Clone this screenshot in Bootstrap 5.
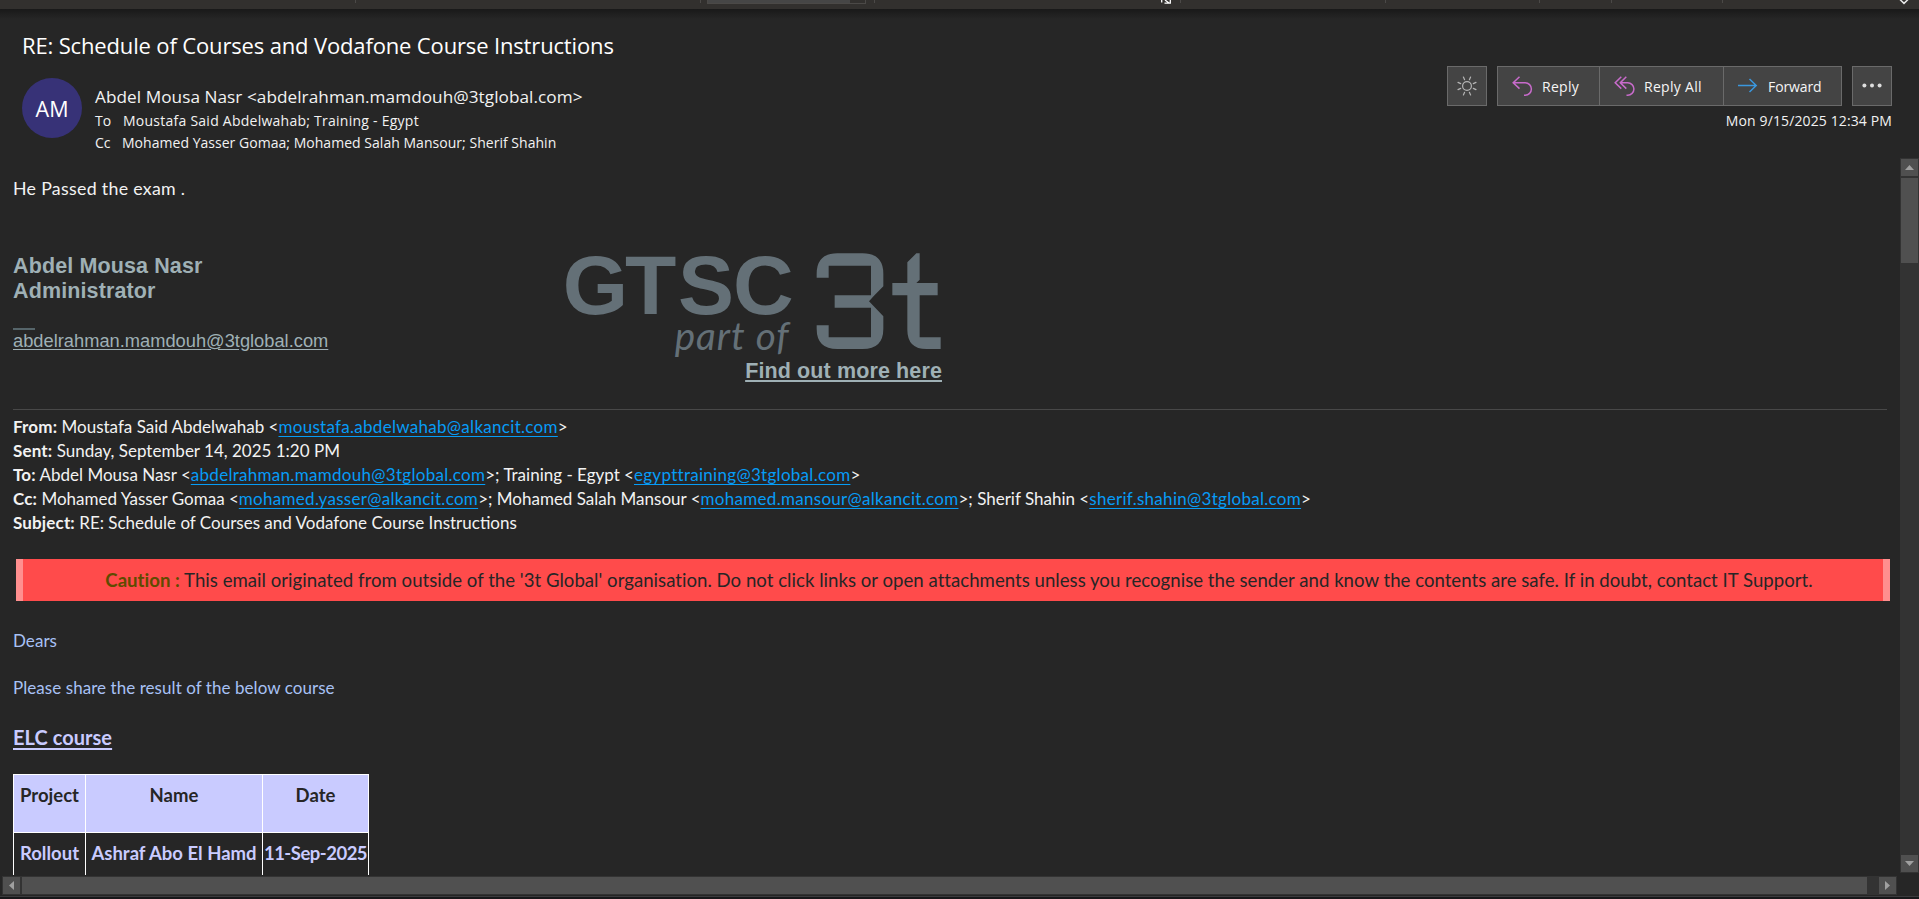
<!DOCTYPE html>
<html lang="en" data-bs-theme="dark">
<head>
<meta charset="utf-8">
<meta name="viewport" content="width=device-width, initial-scale=1">
<title>RE: Schedule of Courses and Vodafone Course Instructions</title>
<link href="https://cdn.jsdelivr.net/npm/bootstrap@5.3.0/dist/css/bootstrap.min.css" rel="stylesheet">
<style>
  body { background: #262626; color: #f2f2f2; font-family: "Open Sans", sans-serif; height: 100vh; }
  .ribbon { height: 9px; background: #32302e; flex: none; }
  .ribbon i { width: 1px; height: 3px; background: #4b4947; }
  .ribbon .field { width: 159px; height: 4px; border: 1px solid #4b4947; border-top: 0; background: linear-gradient(90deg, #464646 142px, #32302e 142px); }
  .ribbon svg { display: block; }

  .msg-head { height: 149px; background: linear-gradient(#191919, #262626 10px); flex: none; padding: 21px 27px 0 22px; }
  .subject { font-size: 22px; line-height: 30px; letter-spacing: -.15px; color: #fff; margin: 0 0 18px; font-weight: 400; }
  .avatar { width: 60px; height: 60px; background: #373277; font-size: 21.5px; line-height: 62px; color: #fff; }
  .people { margin-left: 13px; padding-top: 6px; }
  .from-line { font-size: 17.2px; line-height: 25px; letter-spacing: .05px; margin-bottom: 1px; }
  .rcpt { font-size: 14px; line-height: 22px; }
  .rcpt > span:first-child { width: 27px; }
  .actions { padding-top: 36px; font-size: 14px; gap: 10px; }
  .btn-mail { --bs-btn-bg: #444; --bs-btn-color: #f5f5f5; --bs-btn-border-color: #6a6a6a; --bs-btn-border-radius: 0; --bs-btn-font-size: 14px; --bs-btn-padding-y: 0; height: 40px; display: flex; align-items: center; }
  .btn-sq { width: 40px; padding: 0; justify-content: center; }
  .stamp { font-size: 14px; line-height: 22px; letter-spacing: .12px; padding-top: 4px; }

  .mail { font-family: Lato, sans-serif; font-size: 17px; line-height: 24px; height: 717px; padding: 18px 0 0 13px; white-space: nowrap; }
  .mail p { margin: 0; }
  .sig { width: 929px; margin-top: 53px; height: 155px; font-family: "Liberation Sans", sans-serif; color: #9fb0b5; }
  .sig-name { font-size: 21.5px; line-height: 25px; font-weight: 700; letter-spacing: .12px; padding-top: 1px; }
  .sig-dash { width: 22px; height: 2px; background: #56656a; margin-top: 24px; }
  .sig a, .sig-find { color: inherit; text-decoration: underline; }
  .sig-mail { font-size: 18.3px; line-height: 21px; text-underline-offset: 2px; text-decoration-thickness: 1px; }
  .sig-find { font-size: 21.5px; line-height: 25px; font-weight: 700; letter-spacing: .12px; text-underline-offset: 2px; text-decoration-thickness: 2px; }
  .rule { width: 1874px; height: 1px; background: #484848; margin: 1px 0 5px; }
  .quoted { line-height: 23.9px; height: 120px; }
  .quoted b { letter-spacing: .15px; }
  .quoted a { color: #069cf6; letter-spacing: .29px; text-decoration: underline; text-underline-offset: 3px; text-decoration-thickness: 1px; text-decoration-skip-ink: none; }
  .caution { margin: 24px 0 0 3px; width: 1874px; height: 42px; line-height: 43px; font-size: 18.6px; letter-spacing: .02px; background: #ff4b4b; color: #262626; border: solid #ff8f8f; border-width: 0 7px; padding-left: 12px; }
  .caution b { color: #5f4b00; }
  .blue { color: #a8c1f5; letter-spacing: .06px; }
  .lav { color: #c9cbff; }
  .elc { font-size: 20px; letter-spacing: .05px; text-underline-offset: 3px; text-decoration: underline 2px; text-decoration-skip-ink: none; }
  .course-tbl { width: 355px; table-layout: fixed; border-collapse: collapse; font-size: 18.5px; font-weight: 700; text-align: center; }
  .course-tbl th, .course-tbl td { border: 1px solid #fff; padding: 8px 0 0; vertical-align: top; line-height: 24px; }
  .course-tbl th { background: #c9cbff; color: #262626; height: 58px; text-align: center; }
  .course-tbl td { height: 59px; }

  .vbar { width: 19px; background: #333; height: 715px; padding: 1px; }
  .hbar { height: 19px; width: 1895px; margin: 1px 0 0 2px; background: #333; padding: 1px; }
  .sb { background: #505050; }
  .sb-end { width: 17px; height: 17px; display: flex; align-items: center; justify-content: center; flex: none; }
  .foot { margin-top: 1px; height: 3px; background: #18181a; border-top: 1px solid #3c3c3e; }
</style>
</head>
<body class="d-flex flex-column overflow-hidden">

<div class="ribbon d-flex">
  <i style="margin-left:355px"></i>
  <i style="margin-left:344px"></i>
  <span class="field" style="margin-left:6px"></span>
  <i style="margin-left:8px"></i>
  <svg style="margin-left:286px" width="10" height="4" fill="none" stroke="#fff" stroke-width="1.3"><path d="M.7 0v2.5M4 0l4 3M3.5 3.2h5.8V0"/></svg>
  <i style="margin-left:9px"></i>
  <i style="margin-left:204px"></i>
  <i style="margin-left:153px"></i>
  <i style="margin-left:71px"></i>
  <i style="margin-left:110px"></i>
  <svg style="margin-left:176px" width="10" height="5" fill="none" stroke="#e8e8e8" stroke-width="1.5"><path d="M1 -.5 5 3.4 9 -.5"/></svg>
</div>

<header class="msg-head d-flex justify-content-between">
  <div>
    <h1 class="subject">RE: Schedule of Courses and Vodafone Course Instructions</h1>
    <div class="d-flex">
      <div class="avatar rounded-circle text-center">AM</div>
      <div class="people">
        <div class="from-line">Abdel Mousa Nasr &lt;abdelrahman.mamdouh@3tglobal.com&gt;</div>
        <div class="rcpt d-flex"><span style="width:28px">To</span><span style="letter-spacing:.25px">Moustafa Said Abdelwahab; Training - Egypt</span></div>
        <div class="rcpt d-flex"><span>Cc</span><span style="letter-spacing:.03px">Mohamed Yasser Gomaa; Mohamed Salah Mansour; Sherif Shahin</span></div>
      </div>
    </div>
  </div>
  <div>
    <div class="actions d-flex">
      <button class="btn btn-mail btn-sq" aria-label="Switch background">
        <svg width="20" height="20" fill="none" stroke="#b5b5b5" stroke-width="1.2" stroke-linecap="round"><circle cx="10" cy="10" r="4.4"/><path d="M7.6 3.7 6.4 1M12.4 3.7 13.6 1M7.6 16.3 6.4 19M12.4 16.3l1.2 2.7M3.7 7.6 1 6.4M3.7 12.4 1 13.6M16.3 7.6 19 6.4M16.3 12.4l2.7 1.2"/></svg>
      </button>
      <div class="btn-group">
        <button class="btn btn-mail ps-0" style="width:103px"><svg style="margin:0 9px 0 14px" width="21" height="20" fill="none" stroke="#c86bcb" stroke-width="1.5"><path d="M7.5.8 1.2 6.8l6.3 5.8M1.4 6.8h11.8a6.2 6.2 0 0 1 0 12.4H12"/></svg><span style="letter-spacing:.27px">Reply</span></button>
        <button class="btn btn-mail ps-0" style="width:125px"><svg style="margin:0 9px 0 14px" width="21" height="20" fill="none" stroke="#c86bcb" stroke-width="1.5"><path d="M7.3.8 1.2 6.8l6.1 5.8M12.3.8l-6 6 6 5.8M6.5 6.8h7.2a6.2 6.2 0 0 1 0 12.4h-1.2"/></svg><span style="letter-spacing:.3px">Reply All</span></button>
        <button class="btn btn-mail ps-0" style="width:119px"><svg style="margin:0 10px 0 14px" width="20" height="20" fill="none" stroke="#3b97dd" stroke-width="1.5"><path d="M0 9.5h18.5M11.5 3l6.7 6.5-6.7 6.5"/></svg><span style="letter-spacing:-.1px">Forward</span></button>
      </div>
      <button class="btn btn-mail btn-sq" aria-label="More actions">
        <svg width="20" height="6" fill="#dedede"><circle cx="2.4" cy="2.6" r="2"/><circle cx="10" cy="2.6" r="2"/><circle cx="17.6" cy="2.6" r="2"/></svg>
      </button>
    </div>
    <div class="stamp text-end">Mon 9/15/2025 12:34 PM</div>
  </div>
</header>

<div class="d-flex justify-content-between">
  <main class="mail overflow-hidden flex-grow-1">
    <p style="font-size:17.8px;letter-spacing:.3px">He Passed the exam .</p>
    <div class="sig d-flex justify-content-between">
      <div>
        <div class="sig-name">Abdel Mousa Nasr<br>Administrator</div>
        <div class="sig-dash"></div>
        <a href="#" class="sig-mail">abdelrahman.mamdouh@3tglobal.com</a>
      </div>
      <div class="d-flex flex-column align-items-end">
        <svg class="overflow-visible" width="376" height="106" viewBox="78 66 1128 318" fill="#647077">
          <text x="68 255 414 579" y="249" font-family="Liberation Sans, sans-serif" font-weight="700" font-size="252">GTSC</text>
          <text x="404" y="356" font-family="Lato, sans-serif" font-style="italic" font-size="116" textLength="342">part of</text>
          <path d="M830 140V128Q830 67 892 67H968Q1030 67 1030 128V166L1002 194 987 211 1030 256V293Q1030 354 968 354H892Q830 354 830 293V283H866V319H993V230H884V193H993V104H866V140Z"/>
          <path d="M1102 94 1129 67H1139V146L1129 156H1193V193H1139V319H1202V354H1160Q1102 354 1102 296V193H1057V156H1102Z"/>
        </svg>
        <a href="#" class="sig-find">Find out more here</a>
      </div>
    </div>
    <div class="rule"></div>
    <div class="quoted">
      <p><b>From:</b> Moustafa Said Abdelwahab &lt;<a href="#">moustafa.abdelwahab@alkancit.com</a>&gt;</p>
      <p><b>Sent:</b> Sunday, September 14, 2025 1:20 PM</p>
      <p><b>To:</b> Abdel Mousa Nasr &lt;<a href="#">abdelrahman.mamdouh@3tglobal.com</a>&gt;; Training - Egypt &lt;<a href="#">egypttraining@3tglobal.com</a>&gt;</p>
      <p><b>Cc:</b> Mohamed Yasser Gomaa &lt;<a href="#">mohamed.yasser@alkancit.com</a>&gt;; Mohamed Salah Mansour &lt;<a href="#">mohamed.mansour@alkancit.com</a>&gt;; Sherif Shahin &lt;<a href="#">sherif.shahin@3tglobal.com</a>&gt;</p>
      <p><b>Subject:</b> RE: Schedule of Courses and Vodafone Course Instructions</p>
    </div>
    <div class="caution text-center"><b>Caution :</b> This email originated from outside of the '3t Global' organisation. Do not click links or open attachments unless you recognise the sender and know the contents are safe. If in doubt, contact IT Support.</div>
    <p class="blue" style="margin-top:28px">Dears</p>
    <p class="blue" style="margin-top:23px">Please share the result of the below course</p>
    <p class="lav elc fw-bold" style="margin-top:25px">ELC course</p>
    <table class="course-tbl lav" style="margin-top:25px">
      <colgroup><col style="width:72px"><col style="width:177px"><col style="width:106px"></colgroup>
      <tr><th>Project</th><th>Name</th><th>Date</th></tr>
      <tr><td>Rollout</td><td>Ashraf Abo El Hamd</td><td style="letter-spacing:-.5px">11-Sep-2025</td></tr>
    </table>
  </main>
  <div class="vbar d-flex flex-column">
    <div class="sb sb-end"><svg width="9" height="5" fill="#a0a0a0"><path d="M0 5 4.5 0 9 5z"/></svg></div>
    <div class="sb" style="height:85px;margin-top:2px"></div>
    <div class="sb sb-end mt-auto"><svg width="9" height="5" fill="#a0a0a0"><path d="M0 0h9L4.5 5z"/></svg></div>
  </div>
</div>

<div class="hbar d-flex">
  <div class="sb sb-end"><svg width="5" height="9" fill="#a0a0a0"><path d="M5 0v9L0 4.5z"/></svg></div>
  <div class="sb" style="width:1845px;margin-left:2px"></div>
  <div class="sb sb-end ms-auto"><svg width="5" height="9" fill="#a0a0a0"><path d="M0 0v9l5-4.5z"/></svg></div>
</div>
<div class="foot"></div>

<script src="https://cdn.jsdelivr.net/npm/bootstrap@5.3.0/dist/js/bootstrap.bundle.min.js"></script>
</body>
</html>
